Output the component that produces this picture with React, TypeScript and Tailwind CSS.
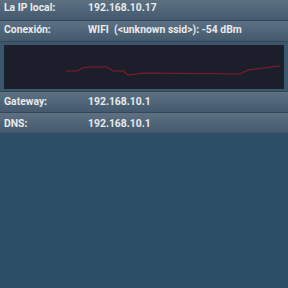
import React from 'react';

const Row = ({ label, value, className = '' }: { label: string; value: string; className?: string }) => (
  <div
    className={`flex items-center h-[21px] bg-gradient-to-b from-[#5d7183] to-[#44596d] border-b border-[#33475a] text-[#e8eaec] font-bold text-[10.4px] ${className}`}
  >
    <div className="w-[88px] pl-[4px]">{label}</div>
    <div className="whitespace-pre">{value}</div>
  </div>
);

const points = [
  [66, 26],
  [78, 26],
  [82, 23],
  [90, 22],
  [107, 22],
  [113, 26],
  [123, 26],
  [128, 30],
  [137, 29],
  [143, 28],
  [240, 29],
  [248, 25],
  [263, 23],
  [280, 21],
];

const App = () => {
  return (
    <div className="w-[288px] h-[288px] bg-[#2d4e67] font-['Roboto','Liberation_Sans',sans-serif] overflow-hidden">
      <Row label="La IP local:" value="192.168.10.17" className="h-[19px] pb-[5px]" />
      <Row label="Conexión:" value="WIFI  (<unknown ssid>): -54 dBm" className="pb-[2px]" />
      <div className="bg-[#3c566b] px-[4px] pt-[3px] pb-[2px]">
        <div className="h-[44px] bg-[#1c1f2b]">
          <svg width="280" height="44" viewBox="0 0 280 44">
            <polyline
              points={points.map(([x, y]) => `${x - 4},${y}`).join(' ')}
              fill="none"
              stroke="#861c27"
              strokeWidth="1.2"
            />
          </svg>
        </div>
      </div>
      <Row label="Gateway:" value="192.168.10.1" className="h-[22px] border-t border-[#2a3c4d]" />
      <Row label="DNS:" value="192.168.10.1" className="pt-[2px]" />
    </div>
  );
};

export default App;
